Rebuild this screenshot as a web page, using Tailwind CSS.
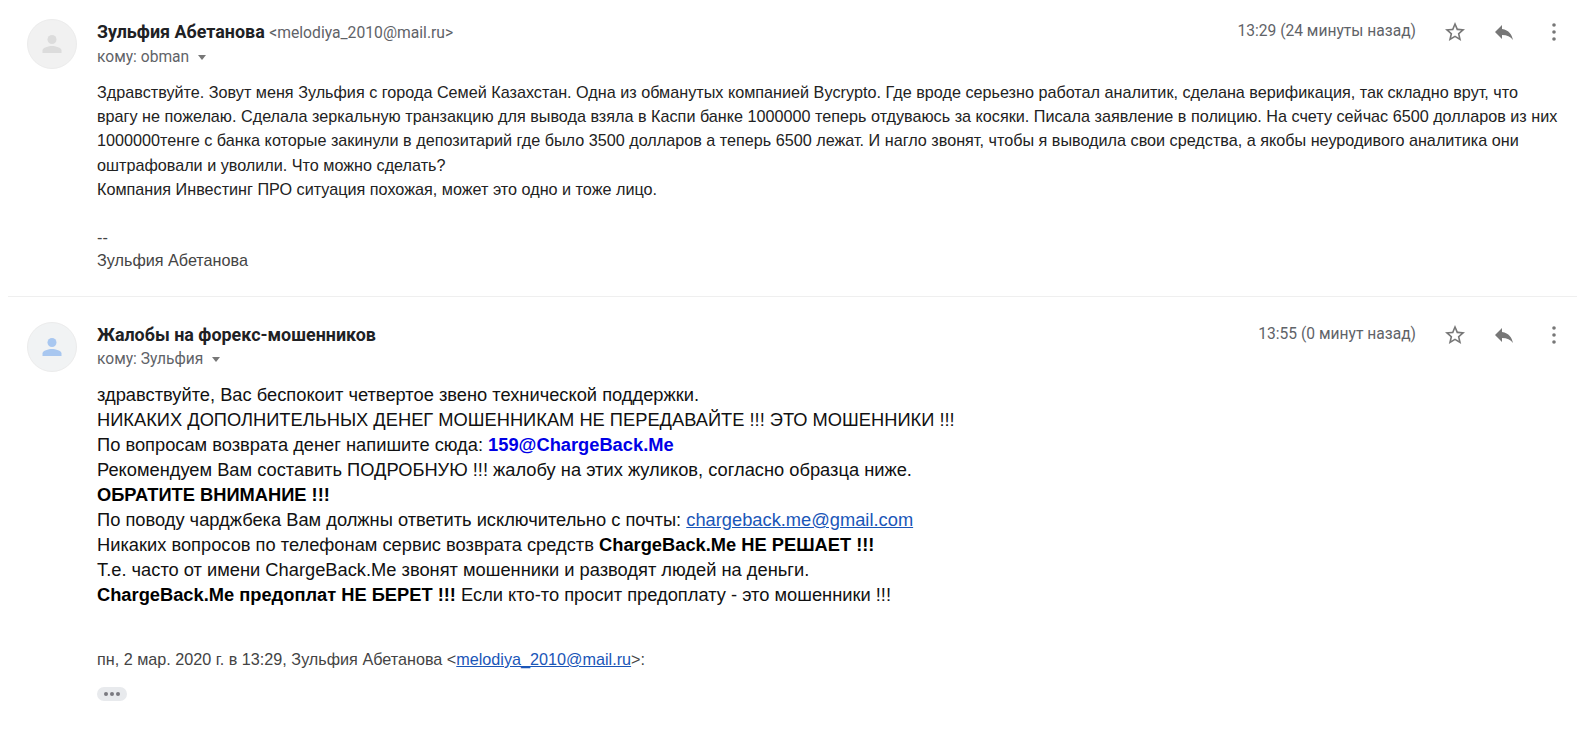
<!DOCTYPE html>
<html lang="ru">
<head>
  <meta charset="UTF-8" />
  <title>Письмо</title>
  <script src="https://cdn.jsdelivr.net/npm/@tailwindcss/browser@4"></script>
</head>
<body class="bg-white text-[#222222] h-[744px] overflow-hidden font-['Liberation_Sans',Arial,sans-serif]">

  <!-- First message -->
  <div class="mx-2 h-[297px] border-b border-[#efefef] flex pt-[19px] pl-[19px]">
    <div class="w-[50px] h-[50px] rounded-full bg-[#f1f1f1] border border-[#ececec] flex items-center justify-center shrink-0">
      <svg class="w-[22px] h-[22px]" viewBox="0 0 22 22" fill="#dcdcdc"><circle cx="11" cy="6.500" r="4.500"/><path d="M1.500 20v-2.500c0-3 6-4.500 9.500-4.500s9.500 1.500 9.500 4.500V20z"/></svg>
    </div>
    <div class="ml-[20px] flex-1 min-w-0 pr-[11px]">
      <div class="flex items-start justify-between h-[60px]">
        <div class="pt-[3px]">
          <div class="font-['Roboto',sans-serif] text-[17.900px] leading-[20px] font-bold text-[#202124]">Зульфия Абетанова <span class="text-[15.700px] font-normal text-[#5f6368]">&lt;melodiya_2010@mail.ru&gt;</span></div>
          <div class="font-['Roboto',sans-serif] text-[15.600px] leading-[18px] mt-[5px] text-[#5f6368] flex items-center">кому: obman <span class="ml-[9px] mt-[1px] border-x-[4.500px] border-x-transparent border-t-[5px] border-t-[#777777]"></span></div>
        </div>
        <div class="flex items-center pt-[1px]">
          <span class="font-['Roboto',sans-serif] text-[15.600px] leading-[20px] text-[#5f6368] -mt-[2px]">13:29 (24 минуты назад)</span>
          <svg class="w-[24px] h-[24px] ml-[27px]" viewBox="0 0 24 24" fill="#777777"><path d="M22 9.240l-7.190-.620L12 2 9.190 8.630 2 9.240l5.460 4.730L5.820 21 12 17.270 18.180 21l-1.630-7.030L22 9.240zM12 15.400l-3.760 2.270 1-4.280-3.320-2.880 4.380-.380L12 6.100l1.710 4.040 4.380.380-3.320 2.880 1 4.280L12 15.400z"/></svg>
          <svg class="w-[24px] h-[24px] ml-[25px]" viewBox="0 0 24 24" fill="#777777"><path d="M10 9V5l-7 7 7 7v-4.100c5 0 8.500 1.600 11 5.100-1-5-4-10-11-11z"/></svg>
          <svg class="w-[24px] h-[24px] ml-[26px]" viewBox="0 0 24 24" fill="#777777"><circle cx="12" cy="5" r="1.800"/><circle cx="12" cy="12" r="1.800"/><circle cx="12" cy="19" r="1.800"/></svg>
        </div>
      </div>
      <div class="text-[16.200px] leading-[24.200px] text-[#222222] mt-[1px]">
        <p>Здравствуйте. Зовут меня Зульфия с города Семей Казахстан. Одна из обманутых компанией Bycrypto. Где вроде серьезно работал аналитик, сделана верификация, так складно врут, что<br />врагу не пожелаю. Сделала зеркальную транзакцию для вывода взяла в Каспи банке 1000000 теперь отдуваюсь за косяки. Писала заявление в полицию. На счету сейчас 6500 долларов из них<br />1000000тенге с банка которые закинули в депозитарий где было 3500 долларов а теперь 6500 лежат. И нагло звонят, чтобы я выводила свои средства, а якобы неуродивого аналитика они оштрафовали и уволили. Что можно сделать?</p>
        <p>Компания Инвестинг ПРО ситуация похожая, может это одно и тоже лицо.</p>
        <p class="mt-[24px] text-[#444444]">--</p>
        <p class="text-[#444444] -mt-[1px]">Зульфия Абетанова</p>
      </div>
    </div>
  </div>

  <!-- Second message -->
  <div class="mx-2 flex pt-[25px] pl-[19px]">
    <div class="w-[50px] h-[50px] rounded-full bg-[#f1f3f4] border border-[#ececec] flex items-center justify-center shrink-0">
      <svg class="w-[22px] h-[22px]" viewBox="0 0 22 22" fill="#a8c7f0"><circle cx="11" cy="6.500" r="4.500"/><path d="M1.500 20v-2.500c0-3 6-4.500 9.500-4.500s9.500 1.500 9.500 4.500V20z"/></svg>
    </div>
    <div class="ml-[20px] flex-1 min-w-0 pr-[11px]">
      <div class="flex items-start justify-between h-[61px]">
        <div class="pt-[3px]">
          <div class="font-['Roboto',sans-serif] text-[17.900px] leading-[20px] font-bold text-[#202124]">Жалобы на форекс-мошенников</div>
          <div class="font-['Roboto',sans-serif] text-[15.600px] leading-[18px] mt-[5px] text-[#5f6368] flex items-center">кому: Зульфия <span class="ml-[9px] mt-[1px] border-x-[4.500px] border-x-transparent border-t-[5px] border-t-[#777777]"></span></div>
        </div>
        <div class="flex items-center pt-[1px]">
          <span class="font-['Roboto',sans-serif] text-[15.600px] leading-[20px] text-[#5f6368] -mt-[2px]">13:55 (0 минут назад)</span>
          <svg class="w-[24px] h-[24px] ml-[27px]" viewBox="0 0 24 24" fill="#777777"><path d="M22 9.240l-7.190-.620L12 2 9.190 8.630 2 9.240l5.460 4.730L5.820 21 12 17.270 18.180 21l-1.630-7.030L22 9.240zM12 15.400l-3.760 2.270 1-4.280-3.320-2.880 4.380-.380L12 6.100l1.710 4.040 4.380.380-3.320 2.880 1 4.280L12 15.400z"/></svg>
          <svg class="w-[24px] h-[24px] ml-[25px]" viewBox="0 0 24 24" fill="#777777"><path d="M10 9V5l-7 7 7 7v-4.100c5 0 8.500 1.600 11 5.100-1-5-4-10-11-11z"/></svg>
          <svg class="w-[24px] h-[24px] ml-[26px]" viewBox="0 0 24 24" fill="#777777"><circle cx="12" cy="5" r="1.800"/><circle cx="12" cy="12" r="1.800"/><circle cx="12" cy="19" r="1.800"/></svg>
        </div>
      </div>
      <div class="text-[18.300px] leading-[25px] text-[#111111] -mt-[1px]">
        <p>здравствуйте, Вас беспокоит четвертое звено технической поддержки.</p>
        <p>НИКАКИХ ДОПОЛНИТЕЛЬНЫХ ДЕНЕГ МОШЕННИКАМ НЕ ПЕРЕДАВАЙТЕ !!! ЭТО МОШЕННИКИ !!!</p>
        <p>По вопросам возврата денег напишите сюда: <b class="text-[#0000e6]">159@ChargeBack.Me</b></p>
        <p>Рекомендуем Вам составить ПОДРОБНУЮ !!! жалобу на этих жуликов, согласно образца ниже.</p>
        <p class="font-bold text-black">ОБРАТИТЕ ВНИМАНИЕ !!!</p>
        <p>По поводу чарджбека Вам должны ответить исключительно с почты: <a href="#" class="text-[#1a56b8] underline">chargeback.me@gmail.com</a></p>
        <p>Никаких вопросов по телефонам сервис возврата средств <b class="text-black">ChargeBack.Me НЕ РЕШАЕТ !!!</b></p>
        <p>Т.е. часто от имени ChargeBack.Me звонят мошенники и разводят людей на деньги.</p>
        <p><b class="text-black">ChargeBack.Me предоплат НЕ БЕРЕТ !!!</b> Если кто-то просит предоплату - это мошенники !!!</p>
      </div>
      <p class="text-[16.200px] leading-[20px] text-[#444444] mt-[42px]">пн, 2 мар. 2020 г. в 13:29, Зульфия Абетанова &lt;<a href="#" class="text-[#1a56b8] underline">melodiya_2010@mail.ru</a>&gt;:</p>
      <div class="mt-[18px] w-[30px] h-[14px] rounded-full bg-[#e8eaed] flex items-center justify-center gap-[2px]">
        <span class="w-[4px] h-[4px] rounded-full bg-[#7a7a80]"></span><span class="w-[4px] h-[4px] rounded-full bg-[#7a7a80]"></span><span class="w-[4px] h-[4px] rounded-full bg-[#7a7a80]"></span>
      </div>
    </div>
  </div>

</body>
</html>
